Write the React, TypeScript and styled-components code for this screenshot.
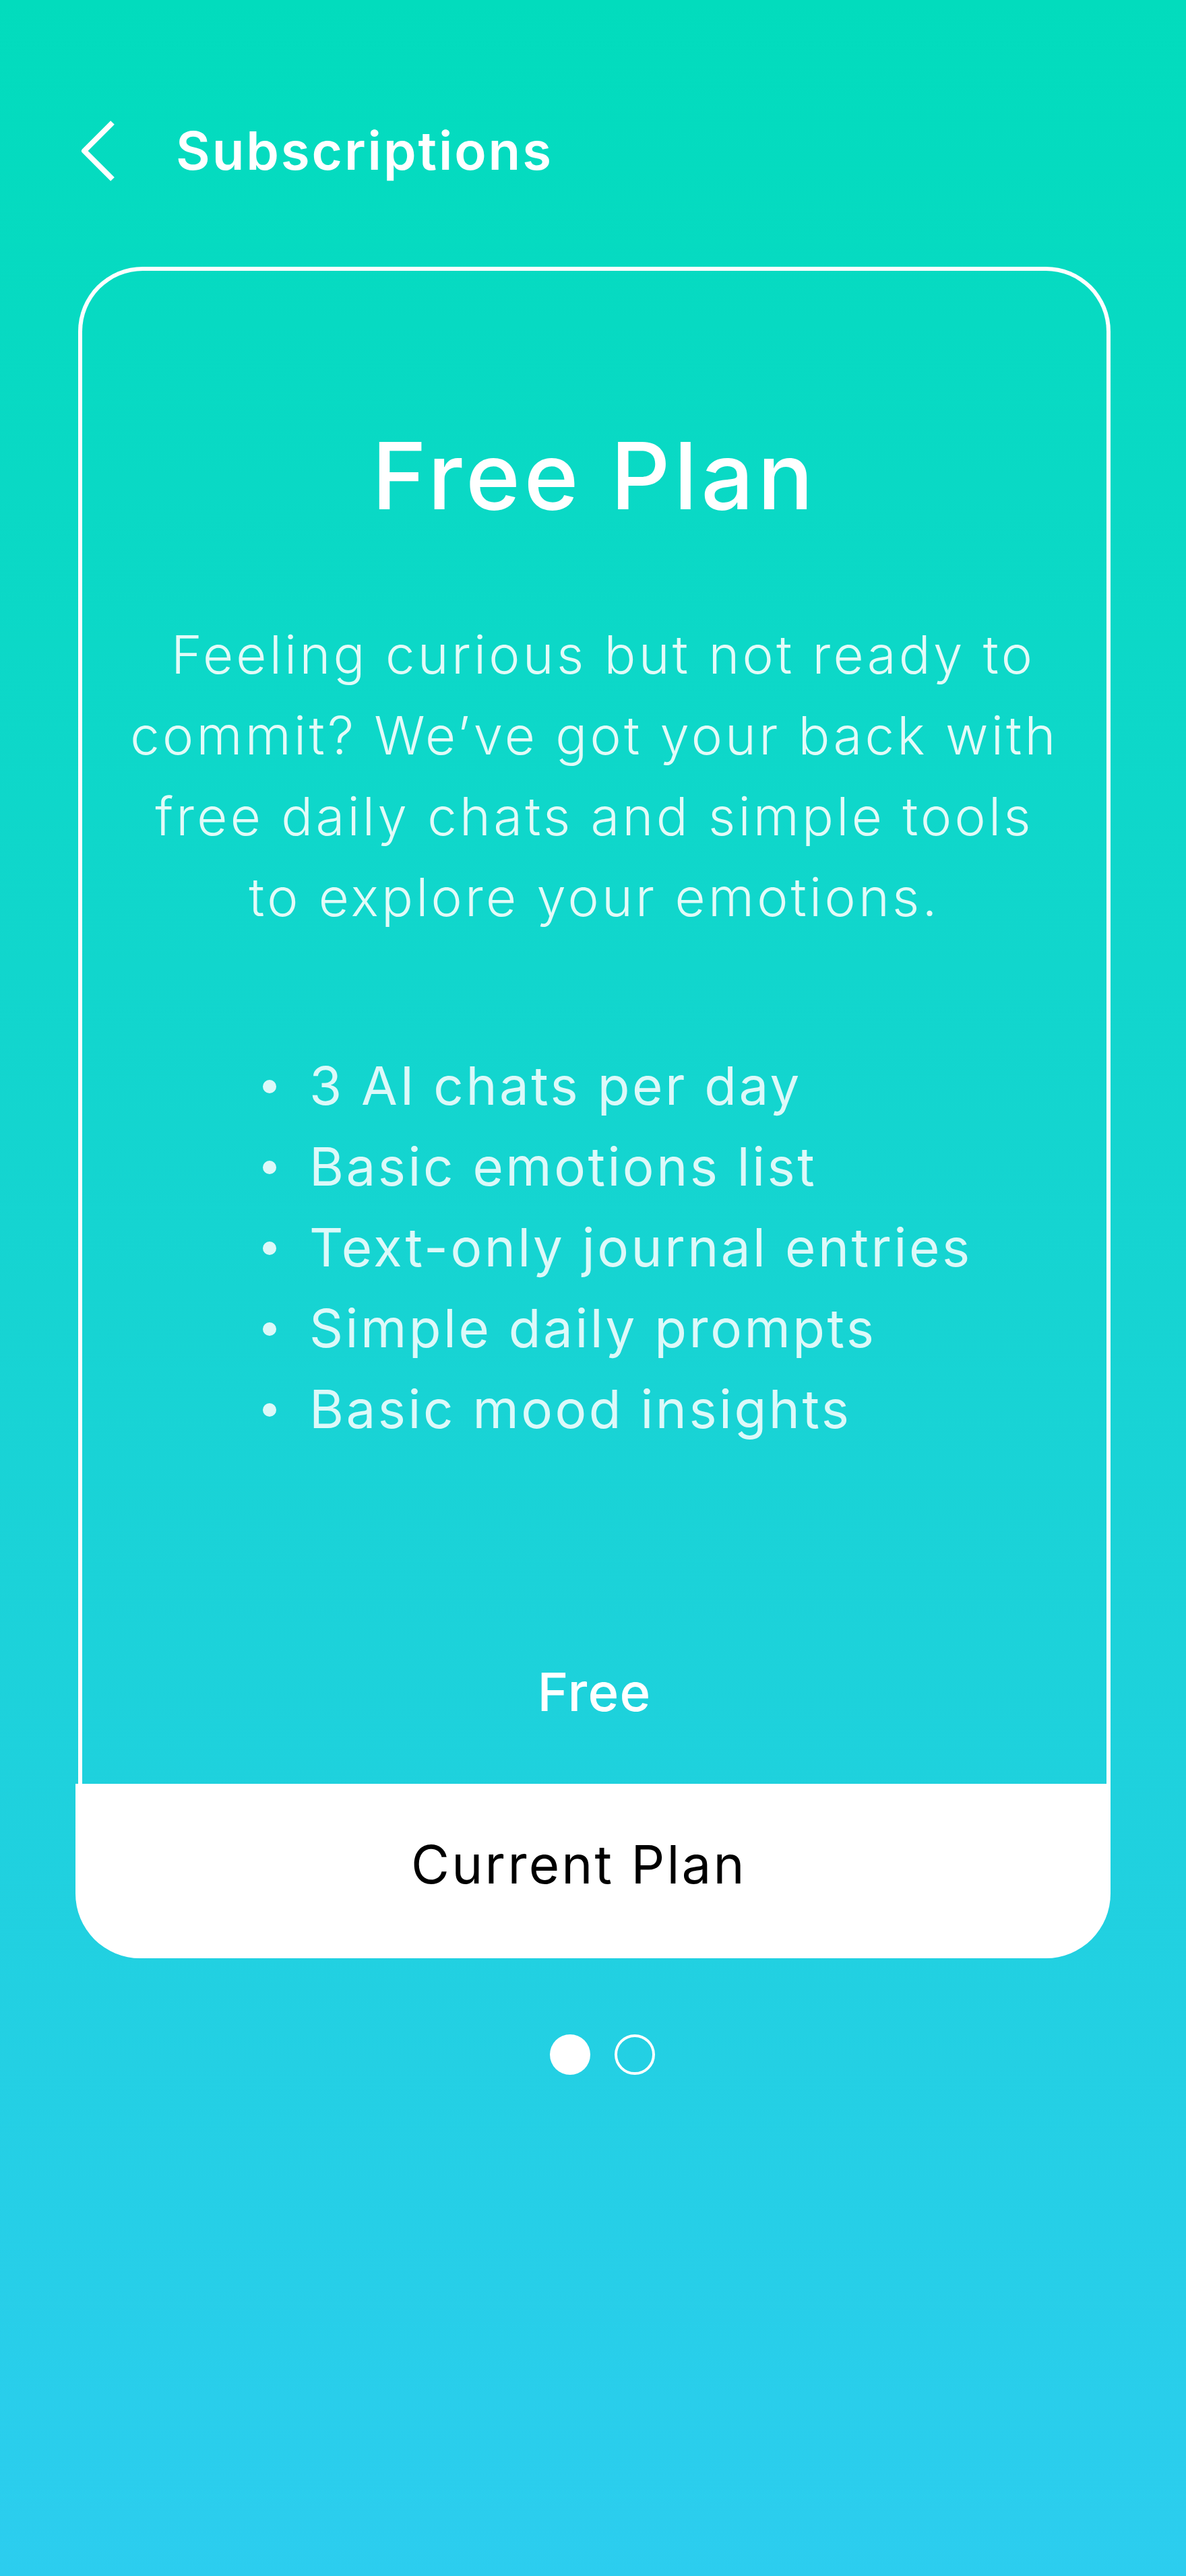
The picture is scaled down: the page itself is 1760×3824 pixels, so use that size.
import React from "react";
import styled, { createGlobalStyle } from "styled-components";

const GlobalStyle = createGlobalStyle`
  html, body {
    margin: 0;
    padding: 0;
  }
  body {
    font-family: "Inter", "Noto Sans", "Liberation Sans", sans-serif;
  }
  * { box-sizing: border-box; }
`;

const Page = styled.div`
  width: 1760px;
  min-height: 3824px;
  background: linear-gradient(180deg, #02dcbd 0%, #16d4d2 50%, #2ccdef 100%);
  display: flex;
  flex-direction: column;
`;

const Header = styled.header`
  display: flex;
  align-items: center;
  height: 92px;
  margin-top: 178px;
  padding-left: 119px;
`;

const BackButton = styled.button`
  display: flex;
  align-items: center;
  justify-content: center;
  width: 52px;
  height: 92px;
  padding: 0;
  border: none;
  background: transparent;
  cursor: pointer;
`;

const HeaderTitle = styled.h1`
  margin: 0 0 0 90px;
  font-size: 78px;
  line-height: 92px;
  font-weight: 600;
  color: #ffffff;
  letter-spacing: 2.9px;
`;

const CardWrap = styled.section`
  display: flex;
  flex-direction: column;
  margin: 126px 112px 0 112px;
`;

const CardBody = styled.div`
  margin-left: 4px;
  border: 6px solid #ffffff;
  border-bottom: none;
  border-radius: 96px 96px 0 0;
  padding: 221px 0 76px 0;
  display: flex;
  flex-direction: column;
  align-items: center;
`;

const PlanTitle = styled.h2`
  margin: 0;
  font-size: 138px;
  line-height: 166px;
  font-weight: 500;
  color: #ffffff;
  letter-spacing: 5.4px;
  text-align: center;
`;

const Description = styled.p`
  margin: 123px 0 0 0;
  font-size: 78px;
  line-height: 120px;
  font-weight: 300;
  color: #e2fbf8;
  letter-spacing: 4.2px;
  text-align: center;
`;

const DescLine = styled.span<{ $shift?: number }>`
  display: block;
  white-space: nowrap;
  padding-left: ${(p) => (p.$shift ? `${p.$shift}px` : "0")};
`;

const FeatureList = styled.ul`
  align-self: stretch;
  list-style: none;
  margin: 160px 0 0 0;
  padding: 0 0 0 268px;
`;

const FeatureItem = styled.li`
  font-size: 78px;
  line-height: 120px;
  font-weight: 400;
  color: #dcf9f9;
  letter-spacing: 3.5px;
  white-space: nowrap;
`;

const Bullet = styled.span`
  display: inline-block;
  width: 20px;
  height: 20px;
  border-radius: 50%;
  background: #dcf9f9;
  margin: 0 49px 17px 0;
`;

const Price = styled.div`
  margin-top: 300px;
  font-size: 78px;
  line-height: 120px;
  font-weight: 500;
  color: #ffffff;
  letter-spacing: 1.2px;
  text-align: center;
`;

const PlanButton = styled.button`
  height: 259px;
  border: none;
  border-radius: 0 0 96px 96px;
  background: #ffffff;
  color: #000000;
  font-family: inherit;
  font-size: 78px;
  line-height: 120px;
  font-weight: 400;
  letter-spacing: 3.2px;
  padding: 60px 42px 0 0;
  display: flex;
  align-items: flex-start;
  justify-content: center;
  cursor: pointer;
`;

const Dots = styled.div`
  display: flex;
  justify-content: center;
  gap: 36px;
  margin-top: 113px;
  padding-left: 28px;
`;

const Dot = styled.span<{ $active?: boolean }>`
  width: 60px;
  height: 60px;
  border-radius: 50%;
  background: ${(p) => (p.$active ? "#ffffff" : "transparent")};
  border: ${(p) => (p.$active ? "none" : "4.5px solid #ffffff")};
`;

const features = [
  "3 AI chats per day",
  "Basic emotions list",
  "Text-only journal entries",
  "Simple daily prompts",
  "Basic mood insights",
];

export default function App() {
  return (
    <>
      <GlobalStyle />
      <Page>
        <Header>
          <BackButton aria-label="Back">
            <svg width="52" height="92" viewBox="0 0 52 92" fill="none">
              <path
                d="M48 4 L6 46 L48 88"
                stroke="#ffffff"
                strokeWidth="8"
                strokeLinejoin="round"
                strokeLinecap="butt"
              />
            </svg>
          </BackButton>
          <HeaderTitle>Subscriptions</HeaderTitle>
        </Header>

        <CardWrap>
          <CardBody>
            <PlanTitle>Free Plan</PlanTitle>
            <Description>
              <DescLine $shift={26}>Feeling curious but not ready to</DescLine>
              <DescLine>commit? We’ve got your back with</DescLine>
              <DescLine>free daily chats and simple tools</DescLine>
              <DescLine>to explore your emotions.</DescLine>
            </Description>
            <FeatureList>
              {features.map((f) => (
                <FeatureItem key={f}>
                  <Bullet />
                  {f}
                </FeatureItem>
              ))}
            </FeatureList>
            <Price>Free</Price>
          </CardBody>
          <PlanButton>Current Plan</PlanButton>
        </CardWrap>

        <Dots>
          <Dot $active />
          <Dot />
        </Dots>
      </Page>
    </>
  );
}
